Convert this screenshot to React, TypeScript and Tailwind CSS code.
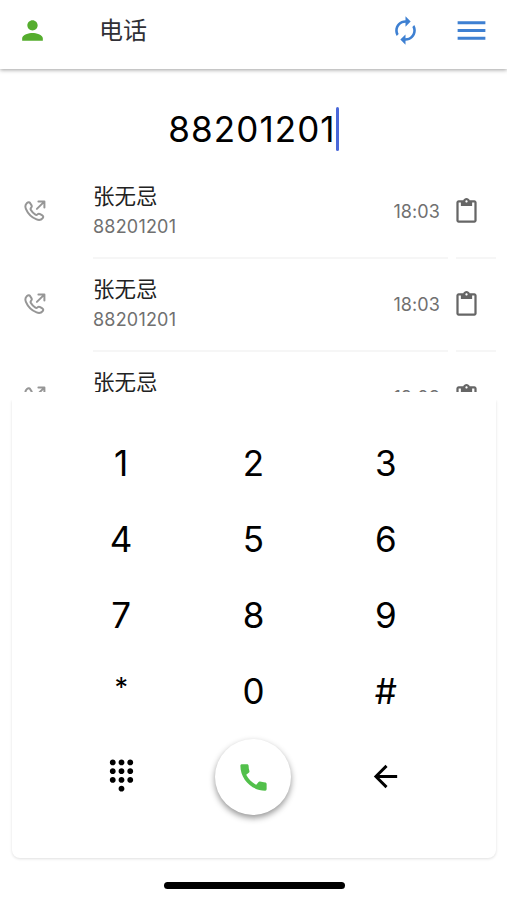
import { useState } from "react";
import {
	MdArrowBack,
	MdAutorenew,
	MdCall,
	MdContentPaste,
	MdDialpad,
	MdMenu,
	MdPerson,
} from "react-icons/md";

const records = [
	{ id: 1, name: "张无忌", number: "88201201", time: "18:03" },
	{ id: 2, name: "张无忌", number: "88201201", time: "18:03" },
	{ id: 3, name: "张无忌", number: "88201201", time: "18:03" },
];

const keys = ["1", "2", "3", "4", "5", "6", "7", "8", "9", "*", "0", "#"];

function OutgoingIcon() {
	return (
		<svg
			className="size-[22px]"
			viewBox="0 0 22 22"
			fill="none"
			stroke="#969696"
			strokeWidth={2}
			strokeLinecap="round"
			strokeLinejoin="round"
		>
			<path d="M3 3 C4.2 2 5.4 2.1 6.2 3.2 L7.4 5.1 C8 6.1 8 6.9 7.1 7.8 C6.3 8.6 6.4 9.2 6.9 10.1 C8 12 9.6 13.6 11.4 14.7 C12.2 15.2 12.8 15.1 13.5 14.4 C14.4 13.5 15.2 13.5 16.2 14.1 L18.3 15.4 C19.4 16.1 19.5 17.1 18.7 18.1 C17 20.2 15 20.4 12.6 19.4 C7.8 17.4 3.9 13.6 1.9 8.8 C.9 6.4 1.2 4.6 3 3 Z" />
			<path d="M12.9 8.9 L20 1.9 M14.4 1.6 H20.4 V7.6" />
		</svg>
	);
}

function App() {
	const [number, setNumber] = useState("88201201");

	return (
		<div className="flex h-[900px] w-[507px] flex-col overflow-hidden bg-white font-['Inter','Noto_Sans_CJK_SC',sans-serif] text-black">
			<header className="z-10 flex h-[69px] shrink-0 items-center bg-white pb-2 pl-[17px] pr-[19px] shadow-[0_1px_4px_rgba(0,0,0,0.38)]">
				<MdPerson className="size-[31px] text-[#55ad2e]" />
				<h1 className="ml-[51px] text-[24px] leading-8 text-[#303036]">电话</h1>
				<button className="ml-auto" type="button">
					<MdAutorenew className="size-[31px] text-[#3e80d2]" />
				</button>
				<button className="ml-8 -mr-0.5" type="button">
					<MdMenu className="size-[37px] text-[#3e80d2]" />
				</button>
			</header>

			<div className="flex h-[97px] shrink-0 items-center justify-center pt-[23px]">
				<span className="text-[35px] leading-[44px] tracking-[1.1px]">{number}</span>
				<span className="h-[44px] w-[3px] rounded-full bg-[#4a68d9]" />
			</div>

			<ul className="h-[226px] shrink-0 overflow-hidden">
				{records.map((record) => (
					<li key={record.id} className="flex h-[93px] pl-6 pr-[11px]">
						<div className="flex w-[69px] items-center pb-[3px]">
							<OutgoingIcon />
						</div>
						<div className="flex w-[355px] items-center justify-between border-b-2 border-[#f6f6f6]">
							<div className="pb-px">
								<p className="text-[21.5px] leading-[30px] text-[#222222]">{record.name}</p>
								<p className="pt-0.5 text-[18px] leading-[28px] tracking-[0.2px] text-[#707070]">{record.number}</p>
							</div>
							<span className="pr-2 text-[18px] tracking-[0.1px] text-[#707070]">{record.time}</span>
						</div>
						<div className="ml-2 flex flex-1 items-center border-b-2 border-[#f6f6f6]">
							<MdContentPaste className="-ml-[3px] size-[27px] text-[#666666]" />
						</div>
					</li>
				))}
			</ul>

			<section className="ml-[12px] mr-[11px] mt-2 h-[458px] shrink-0 rounded-b-lg pl-[43px] pr-[44px] pt-[25px] shadow-[0_1px_3px_rgba(0,0,0,0.13)] [clip-path:inset(0_-5px_-6px)]">
				<div className="grid grid-cols-3">
					{keys.map((key) => (
						<button
							key={key}
							className={key === "*" ? "h-[76px] pb-1.5 text-[27px]" : "h-[76px] text-[35px]"}
							type="button"
							onClick={() => setNumber(number + key)}
						>
							{key}
						</button>
					))}
				</div>
				<div className="mt-2.5 grid grid-cols-3 place-items-center">
					<MdDialpad className="mb-[3px] size-[35px]" />
					<button
						className="flex size-[76px] items-center justify-center rounded-full bg-white shadow-[0_3px_6px_rgba(0,0,0,0.42)]"
						type="button"
					>
						<MdCall className="size-[35px] text-[#52c04b]" />
					</button>
					<button className="mb-px" type="button" onClick={() => setNumber(number.slice(0, -1))}>
						<MdArrowBack className="size-[35px]" />
					</button>
				</div>
			</section>

			<div className="ml-[164px] mt-[24px] h-[7px] w-[181px] shrink-0 rounded-full bg-black" />
		</div>
	);
}

export default App;
